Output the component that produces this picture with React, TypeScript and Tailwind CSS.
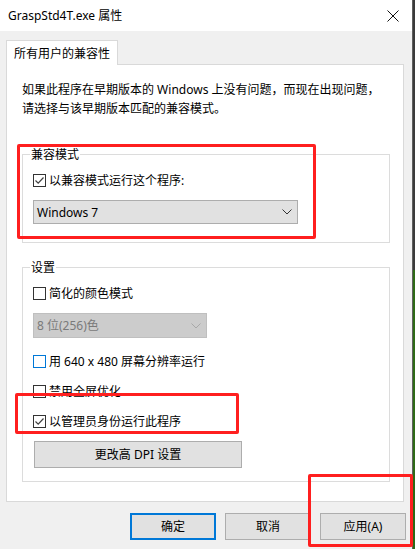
const Check = ({ checked, focus }: { checked?: boolean; focus?: boolean }) => (
  <span
    className={
      "w-[13px] h-[13px] shrink-0 bg-white border flex items-center justify-center " +
      (focus ? "border-[#0078d7]" : "border-[#333333]")
    }
  >
    {checked && (
      <svg width="11" height="11" viewBox="0 0 11 11">
        <path d="M1.5 5.5 L4.2 8.2 L9.5 2.5" fill="none" stroke="#404040" strokeWidth="1.2" />
      </svg>
    )}
  </span>
);

const Chevron = ({ color }: { color: string }) => (
  <svg width="10" height="6" viewBox="0 0 10 6">
    <path d="M0.5 0.5 L5 5 L9.5 0.5" fill="none" stroke={color} strokeWidth="1" />
  </svg>
);

const Row = ({ label, checked, focus, className }: { label: string; checked?: boolean; focus?: boolean; className?: string }) => (
  <div className={"flex items-center gap-[3px] h-[19px] " + (className ?? "")}>
    <Check checked={checked} focus={focus} />
    <span>{label}</span>
  </div>
);

export default function App() {
  return (
    <div className="relative w-[415px] h-[549px] flex overflow-hidden text-[12px] leading-[19px] text-black font-['Noto_Sans','Noto_Sans_CJK_SC',sans-serif]">
      <div className="w-[413px] flex flex-col bg-[#f0f0f0] border-r border-[#5f5f5f]">
        {/* title bar */}
        <div className="h-[31px] shrink-0 bg-white flex items-center justify-between pl-[8px] pr-[13px]">
          <span className="text-[12px]">GraspStd4T.exe 属性</span>
          <svg width="12" height="12" viewBox="0 0 12 12">
            <path d="M0.5 0.5 L11.5 11.5 M11.5 0.5 L0.5 11.5" stroke="#111" strokeWidth="1" />
          </svg>
        </div>

        <div className="pl-[6px] pt-[9px]">
          <div className="relative z-10 w-[112px] h-[25px] -mb-px bg-white border border-b-0 border-[#d9d9d9] flex items-center pl-[7px]">
            所有用户的兼容性
          </div>

          <div className="w-[398px] h-[438px] bg-white border border-[#d9d9d9] pl-[15px] pr-[13px] pt-[15px]">
            <p>
              如果此程序在早期版本的 Windows 上没有问题，而现在出现问题，
              <br />
              请选择与该早期版本匹配的兼容模式。
            </p>

            <fieldset className="mt-[27px] w-[368px] border border-[#dcdcdc] pl-[10px] pb-[18px]">
              <legend className="-ml-[3px] px-[1px]">兼容模式</legend>
              <Row className="mt-[7px]" label="以兼容模式运行这个程序:" checked />
              <div className="mt-[10px] w-[265px] h-[24px] bg-[#e1e1e1] border border-[#adadad] flex items-center justify-between pl-[3px] pr-[5px]">
                <span>Windows 7</span>
                <Chevron color="#333" />
              </div>
            </fieldset>

            <fieldset className="mt-[15px] w-[368px] border border-[#dcdcdc] pl-[10px] pb-[13px]">
              <legend className="-ml-[3px] px-[1px]">设置</legend>
              <Row className="mt-[7px]" label="简化的颜色模式" />
              <div className="mt-[10px] w-[174px] h-[25px] bg-[#cccccc] border border-[#bfbfbf] flex items-center justify-between pl-[3px] pr-[5px] text-[#7a7a7a]">
                <span>8 位(256)色</span>
                <Chevron color="#a8a8a8" />
              </div>
              <Row className="mt-[14px]" label="用 640 x 480 屏幕分辨率运行" focus />
              <Row className="mt-[11px]" label="禁用全屏优化" />
              <Row className="mt-[11px]" label="以管理员身份运行此程序" checked />
              <div className="mt-[10px] ml-px w-[208px] h-[27px] bg-[#e1e1e1] border border-[#adadad] flex items-center justify-center">
                更改高 DPI 设置
              </div>
            </fieldset>
          </div>
        </div>

        <div className="mt-[11px] flex justify-end gap-[9px] pr-[6px]">
          <div className="w-[86px] h-[27px] bg-[#e1e1e1] border-2 border-[#0078d7] flex items-center justify-center">确定</div>
          <div className="w-[86px] h-[27px] bg-[#e1e1e1] border border-[#adadad] flex items-center justify-center">取消</div>
          <div className="w-[86px] h-[27px] bg-[#e1e1e1] border border-[#adadad] flex items-center justify-center">应用(A)</div>
        </div>
      </div>

      <div className="w-[2px] flex flex-col">
        <div className="h-[270px] bg-[#3a3a3a]" />
        <div className="flex-1 bg-[#2e6a16]" />
      </div>

      {/* red annotation boxes */}
      <div className="absolute left-[17px] top-[144px] w-[299px] h-[95px] border-[3px] border-[#ff1f1f] rounded-[2px]" />
      <div className="absolute left-[15px] top-[393px] w-[224px] h-[41px] border-[3px] border-[#ff1f1f] rounded-[2px]" />
      <div className="absolute left-[308px] top-[474px] w-[105px] h-[73px] border-[3px] border-[#ff1f1f] rounded-[2px]" />
    </div>
  );
}
